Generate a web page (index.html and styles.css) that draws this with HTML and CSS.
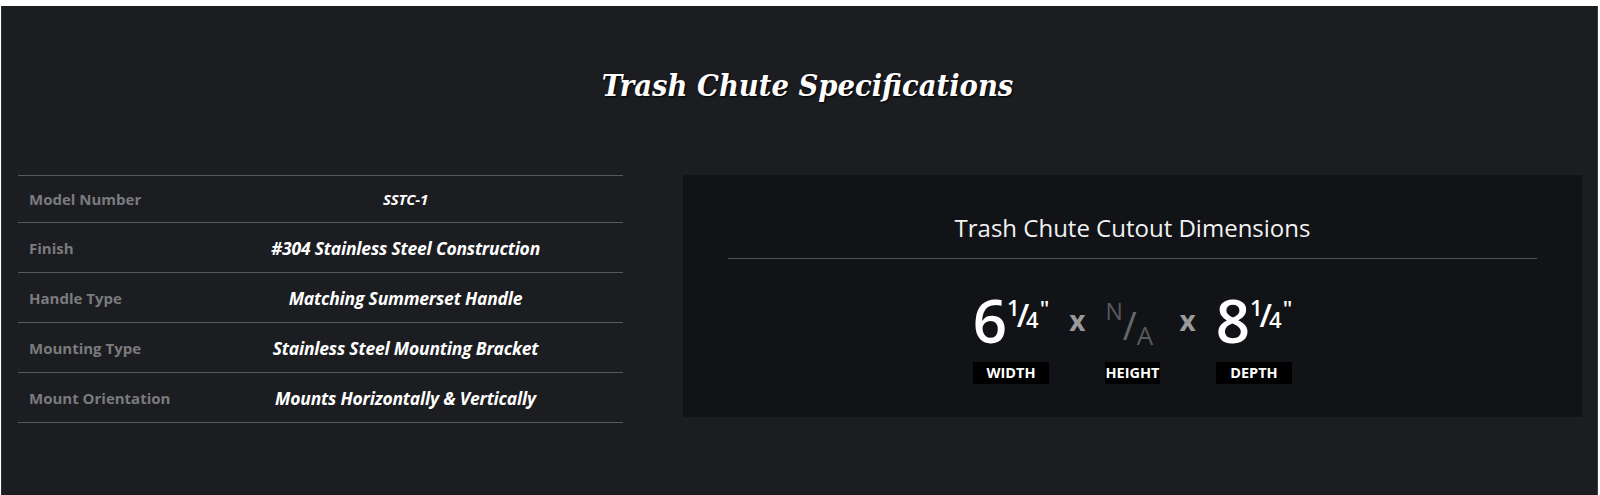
FILE: index.html
```html
<!DOCTYPE html>
<html lang="en">
<head>
    <meta charset="UTF-8">
    <meta name="viewport" content="width=device-width, initial-scale=1.0">
    <title>Trash Chute Specifications</title>
    <link rel="stylesheet" href="styles.css">
</head>
<body>
    <div class="specs">
        <h2 class="specs-title">Trash Chute Specifications</h2>

        <div class="specs-body">
            <table class="spec-table">
                <tr class="first">
                    <th>Model Number</th>
                    <td class="small">SSTC-1</td>
                </tr>
                <tr>
                    <th>Finish</th>
                    <td>#304 Stainless Steel Construction</td>
                </tr>
                <tr>
                    <th>Handle Type</th>
                    <td>Matching Summerset Handle</td>
                </tr>
                <tr>
                    <th>Mounting Type</th>
                    <td>Stainless Steel Mounting Bracket</td>
                </tr>
                <tr>
                    <th>Mount Orientation</th>
                    <td>Mounts Horizontally &amp; Vertically</td>
                </tr>
            </table>

            <div class="cutout">
                <h3>Trash Chute Cutout Dimensions</h3>
                <div class="dims">
                    <div class="dim">
                        <div class="dim-value">6<span class="frac"><span class="num">1</span><span class="sl">/</span><span class="den">4</span><span class="qt">"</span></span></div>
                        <div class="dim-label">Width</div>
                    </div>
                    <div class="times">x</div>
                    <div class="dim">
                        <div class="dim-value na"><span class="na-n">N</span><span class="na-sl">/</span><span class="na-a">A</span></div>
                        <div class="dim-label">Height</div>
                    </div>
                    <div class="times">x</div>
                    <div class="dim">
                        <div class="dim-value">8<span class="frac"><span class="num">1</span><span class="sl">/</span><span class="den">4</span><span class="qt">"</span></span></div>
                        <div class="dim-label">Depth</div>
                    </div>
                </div>
            </div>
        </div>
    </div>
</body>
</html>
```

FILE: styles.css
```css
body {
    margin: 6px 2px 0 1px;
    background: #fff;
    font-family: "Open Sans", Arial, sans-serif;
}
.specs {
    background: #1c1d21;
    border-left: 1px solid #2e2f33;
    border-right: 1px solid #3a3b3f;
    min-height: 600px;
    padding: 59px 0 0 16px;
}
.specs-title {
    margin: 0;
    text-align: center;
    font-family: "DejaVu Serif", "Liberation Serif", serif;
    font-style: italic;
    font-weight: bold;
    font-stretch: condensed;
    font-size: 30.5px;
    line-height: 40px;
    color: #fff;
    text-shadow: 1px 1px 2px #000;
}
.specs-body {
    display: flex;
    align-items: flex-start;
    gap: 60px;
    margin-top: 70px;
}
.spec-table {
    width: 605px;
    border-collapse: collapse;
}
.spec-table tr {
    border-top: 1px solid #58595c;
    border-bottom: 1px solid #58595c;
    height: 50px;
}
.spec-table tr.first {
    height: 47px;
}
.spec-table th {
    width: 159px;
    padding: 0 0 0 11px;
    text-align: left;
    font-size: 15px;
    font-weight: 700;
    color: #7a7b7d;
}
.spec-table td {
    padding: 0;
    text-align: center;
    font-size: 17.5px;
    font-weight: 700;
    font-style: italic;
    letter-spacing: -0.2px;
    color: #fff;
}
.spec-table td.small {
    font-size: 15px;
}
.cutout {
    width: 809px;
    background: #111316;
    padding: 38px 45px 33px;
}
.cutout h3 {
    margin: 0;
    padding-bottom: 15px;
    border-bottom: 1px solid #4f5054;
    text-align: center;
    font-size: 24px;
    font-weight: 400;
    line-height: 30px;
    color: #f2f2f2;
}
.dims {
    display: flex;
    justify-content: center;
    align-items: flex-start;
    gap: 20px;
    margin-top: 21px;
}
.dim {
    display: flex;
    flex-direction: column;
    align-items: stretch;
}
.dim-value {
    font-size: 60px;
    font-weight: 600;
    line-height: 81px;
    height: 81px;
    color: #fff;
    white-space: nowrap;
}
.dim-value span {
    line-height: 1;
}
.frac {
    font-size: 22px;
}
.frac .num {
    vertical-align: 27px;
}
.frac .sl {
    font-size: 32px;
    vertical-align: 16px;
    margin: 0 -3px;
}
.frac .den {
    vertical-align: 15px;
}
.frac .qt {
    vertical-align: 26px;
    margin-left: 1px;
}
.na {
    font-weight: 400;
    color: #58595c;
}
.na-n {
    font-size: 23px;
    vertical-align: 23px;
}
.na-sl {
    font-size: 38px;
    vertical-align: 3px;
    color: #66676a;
}
.na-a {
    font-size: 26px;
    vertical-align: -2px;
}
.dim-label {
    margin-top: 1px;
    background: #000;
    color: #fff;
    text-align: center;
    text-transform: uppercase;
    font-size: 14.5px;
    font-weight: 700;
    line-height: 22px;
}
.times {
    font-size: 28px;
    font-weight: 700;
    line-height: 81px;
    color: #9a9a9c;
}
```
